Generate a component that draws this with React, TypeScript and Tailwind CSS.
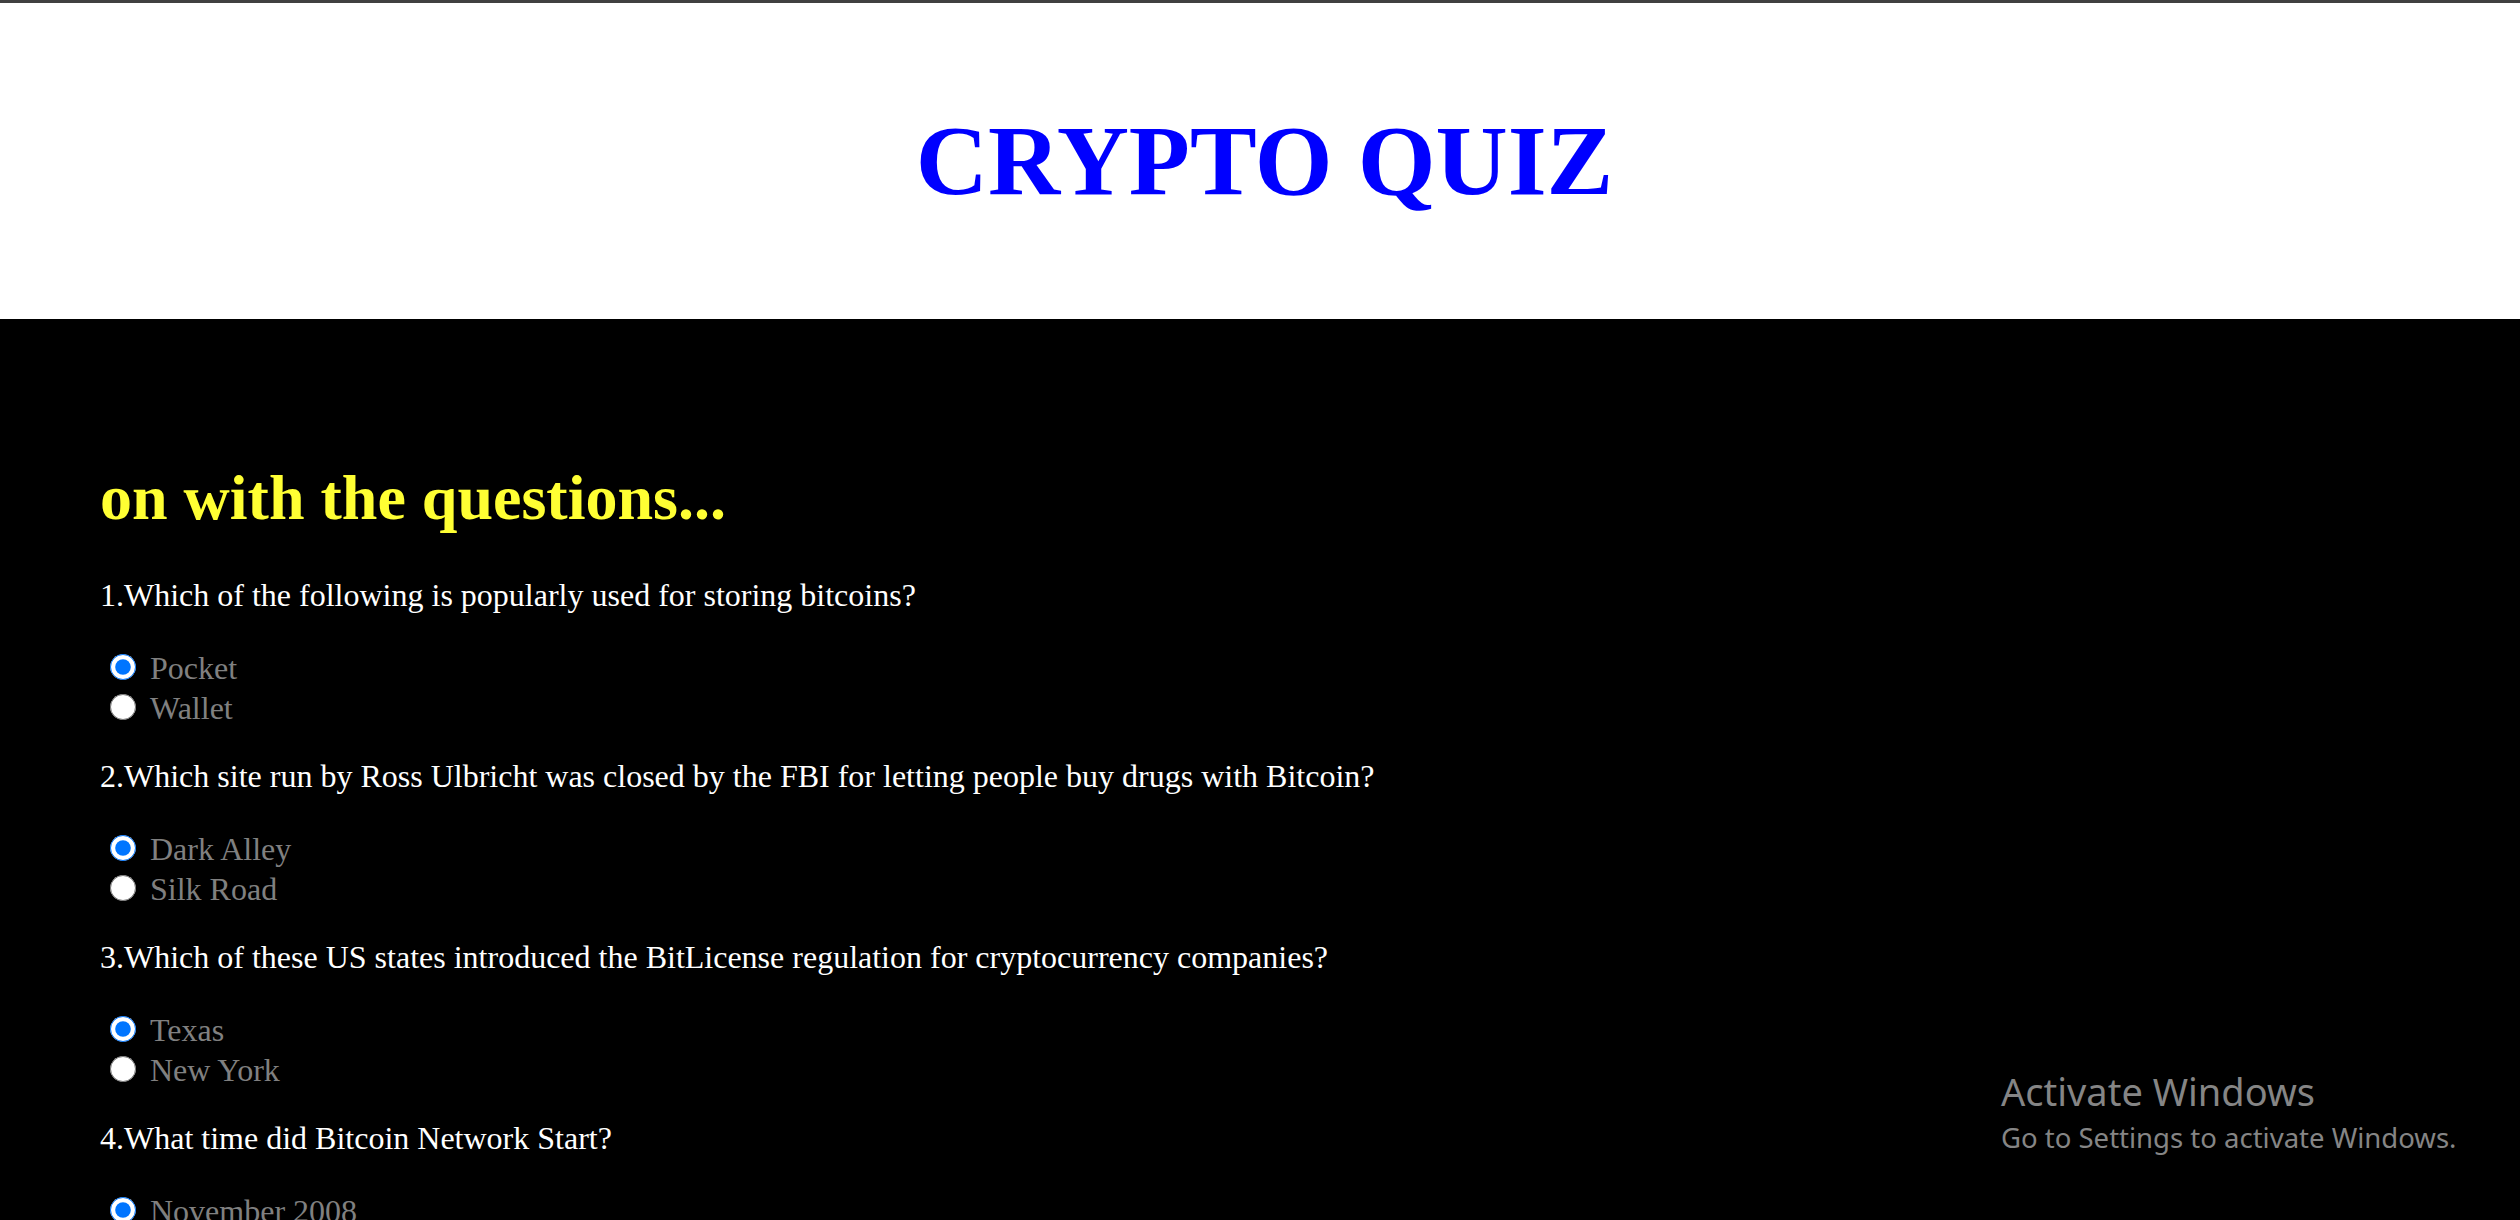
import React from 'react'

type Question = {
  text: string
  name: string
  options: string[]
}

const QUESTIONS: Question[] = [
  {
    text: '1.Which of the following is popularly used for storing bitcoins?',
    name: 'q1',
    options: ['Pocket', 'Wallet'],
  },
  {
    text: '2.Which site run by Ross Ulbricht was closed by the FBI for letting people buy drugs with Bitcoin?',
    name: 'q2',
    options: ['Dark Alley', 'Silk Road'],
  },
  {
    text: '3.Which of these US states introduced the BitLicense regulation for cryptocurrency companies?',
    name: 'q3',
    options: ['Texas', 'New York'],
  },
  {
    text: '4.What time did Bitcoin Network Start?',
    name: 'q4',
    options: ['November 2008', 'January 2009'],
  },
]

const serif = { fontFamily: '"Liberation Serif", "Times New Roman", serif' }

function QuestionBlock({ q }: { q: Question }) {
  return (
    <div className="flex flex-col">
      <p className="text-[32px] leading-[37px] text-white whitespace-nowrap">{q.text}</p>
      <div className="mt-[34px] flex flex-col">
        {q.options.map((opt, i) => (
          <label key={opt} className="flex h-[40px] items-start">
            <input
              type="radio"
              name={q.name}
              defaultChecked={i === 0}
              className="ml-[10px] mr-[14px] mt-[6px] h-[26px] w-[26px] shrink-0"
            />
            <span className="text-[32px] leading-[40px] text-[#808080] whitespace-nowrap">{opt}</span>
          </label>
        ))}
      </div>
    </div>
  )
}

export default function App() {
  return (
    <div className="relative flex h-[1220px] flex-col overflow-hidden bg-black" style={serif}>
      {/* window edge */}
      <div className="h-[3px] shrink-0 bg-[#404040]" />

      {/* header */}
      <header className="flex h-[316px] shrink-0 items-center justify-center bg-white pl-[9px]">
        <h1 className="text-[100px] font-bold leading-[100px] text-[#0000ff]">CRYPTO QUIZ</h1>
      </header>

      {/* quiz */}
      <main className="flex flex-1 flex-col bg-black pl-[100px] pt-[147px]">
        <h2 className="text-[64px] font-bold leading-[64px] text-[#ffff33]">on with the questions...</h2>
        <div className="mt-[47px] flex flex-col gap-[30px]">
          {QUESTIONS.map((q) => (
            <QuestionBlock key={q.name} q={q} />
          ))}
        </div>
      </main>

      {/* activation watermark */}
      <div
        className="pointer-events-none absolute left-[2001px] top-[1066px] flex flex-col text-[#858585]"
        style={{ fontFamily: '"Noto Sans", "Open Sans", sans-serif' }}
      >
        <span className="text-[38px] leading-[50px]">Activate Windows</span>
        <span className="text-[27.5px] leading-[44px]">Go to Settings to activate Windows.</span>
      </div>
    </div>
  )
}
